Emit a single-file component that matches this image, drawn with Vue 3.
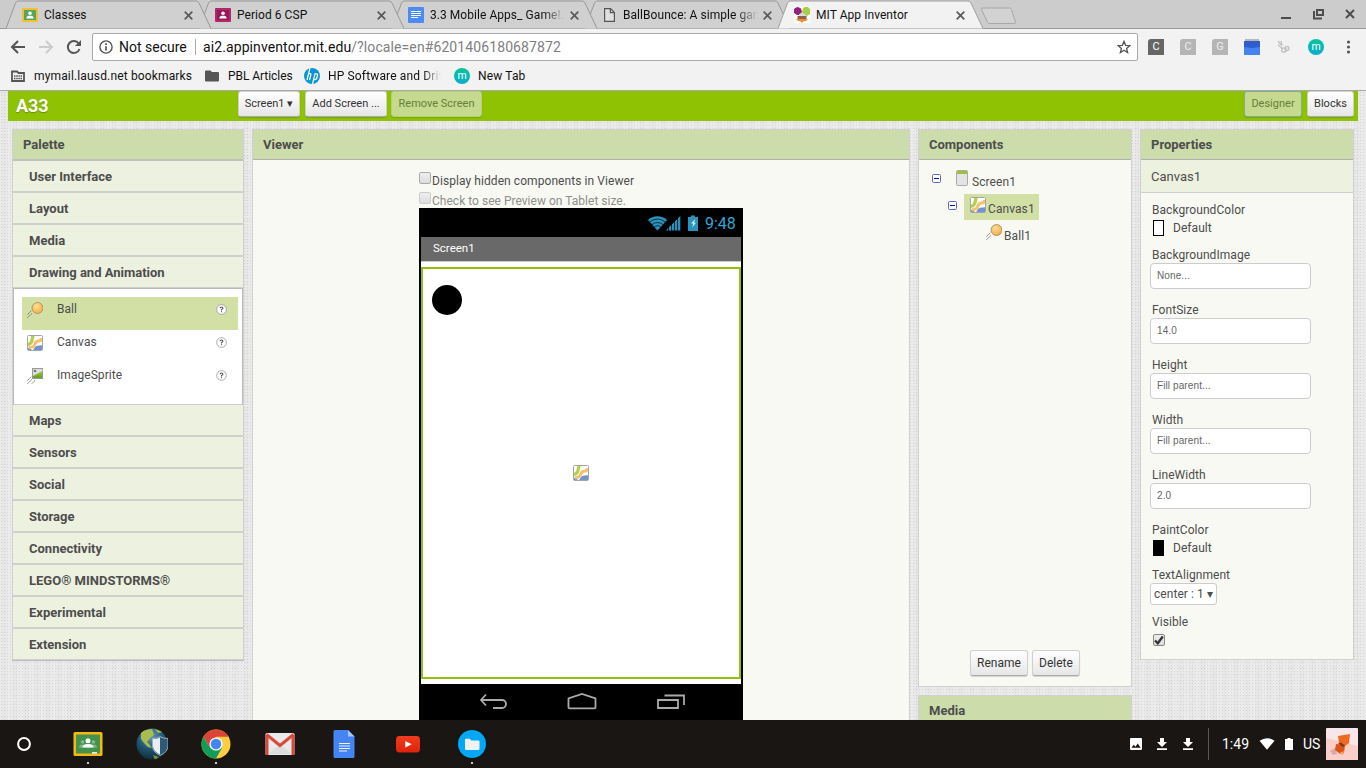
<script setup>
const tabs = [
  { title: 'Classes', icon: 'i-class-y' },
  { title: 'Period 6 CSP', icon: 'i-class-p' },
  { title: '3.3 Mobile Apps_ Game!.', icon: 'i-doc-tab' },
  { title: 'BallBounce: A simple gam', icon: 'i-file' },
  { title: 'MIT App Inventor', icon: 'i-ai', active: true },
]
const groupsTop = ['User Interface', 'Layout', 'Media', 'Drawing and Animation']
const groupsBottom = ['Maps', 'Sensors', 'Social', 'Storage', 'Connectivity', 'LEGO® MINDSTORMS®', 'Experimental', 'Extension']
const items = [
  { name: 'Ball', icon: 'i-ball', on: true },
  { name: 'Canvas', icon: 'i-canvas' },
  { name: 'ImageSprite', icon: 'i-sprite' },
]
const fields = [
  { label: 'BackgroundImage', value: 'None...' },
  { label: 'FontSize', value: '14.0' },
  { label: 'Height', value: 'Fill parent...' },
  { label: 'Width', value: 'Fill parent...' },
  { label: 'LineWidth', value: '2.0' },
]
</script>

<template>
  <div class="screen">
    <svg class="defs" width="0" height="0">
      <defs>
        <radialGradient id="gBall" cx=".4" cy=".35" r=".7"><stop offset="0" stop-color="#ffe0a0" /><stop offset=".5" stop-color="#fbc468" /><stop offset="1" stop-color="#f5ab45" /></radialGradient>
        <radialGradient id="gGlobe" cx=".45" cy=".25" r=".8"><stop offset="0" stop-color="#6f9db3" /><stop offset=".5" stop-color="#1f5673" /><stop offset="1" stop-color="#0c2533" /></radialGradient>
        <linearGradient id="gGreen" x1="0" y1="0" x2="0" y2="1"><stop offset="0" stop-color="#b9de55" /><stop offset="1" stop-color="#5d9a18" /></linearGradient>
        <linearGradient id="gRed" x1="0" y1="0" x2="0" y2="1"><stop offset="0" stop-color="#f23c1e" /><stop offset="1" stop-color="#e0220a" /></linearGradient>
        <clipPath id="cCanvas"><rect x="1" y="1" width="14" height="14" /></clipPath>
        <clipPath id="cGlobe"><circle cx="16" cy="16" r="15.5" /></clipPath>
      </defs>
      <symbol id="i-class-y" viewBox="0 0 16 16"><rect y="1" width="16" height="14" rx="1" fill="#f4c02e" /><rect x="2" y="3" width="12" height="10" fill="#57a464" /><circle cx="8" cy="6.3" r="1.8" fill="#fff" /><path d="M4.300 11.400c0-2.200 2-2.600 3.700-2.600s3.700.4 3.700 2.600z" fill="#fff" /></symbol>
      <symbol id="i-class-p" viewBox="0 0 16 16"><rect y="1" width="16" height="14" rx="1" fill="#b3266b" /><rect x="2" y="3" width="12" height="10" fill="#931c56" /><circle cx="8" cy="6.300" r="1.800" fill="#fff" /><path d="M4.300 11.400c0-2.200 2-2.600 3.700-2.600s3.700.4 3.700 2.600z" fill="#fff" /></symbol>
      <symbol id="i-doc-tab" viewBox="0 0 16 16"><rect width="16" height="16" rx="1" fill="#4c8bf5" /><path d="M3 4.500h10M3 6.500h10M3 8.500h10M3 10.500h7" stroke="#fff" /></symbol>
      <symbol id="i-file" viewBox="0 0 16 16"><path d="M3.600 1.600h5.900l3.900 3.900v8.900H3.600z" fill="#e0e0e0" stroke="#555" stroke-width="1.200" /><path d="M9.300 1.600v4.100h4.100" fill="none" stroke="#555" stroke-width="1.200" /></symbol>
      <symbol id="i-ai" viewBox="0 0 16 16"><rect width="16" height="16" fill="#fff" /><path d="M0 2L2 .5 4 0l3 1.500L8 5 6 8H3L0 6z" fill="#93207d" /><path d="M9 1l2-1h3l2 2v5l-3 2-3-1-2-3z" fill="#a5cf47" /><path d="M4.500 9Q5 6 8 6t3.500 3z" fill="#d9d9d9" /><rect x="3.500" y="9" width="9" height="3" fill="#8d6047" /><path d="M2 12h12l-2 2H10l-2 2-2-2H4z" fill="#f28a30" /></symbol>
      <symbol id="i-ball" viewBox="0 0 16 16"><circle cx="10.500" cy="6" r="5.500" fill="url(#gBall)" stroke="#a99267" stroke-width=".9" /><path d="M.5 12.500l4-4M.5 15.800l4.500-4.500" stroke="#666" stroke-width=".9" stroke-dasharray="2 .7" /></symbol>
      <symbol id="i-sprite" viewBox="0 0 16 16"><rect x="5.500" y=".500" width="10" height="10" fill="url(#gGreen)" stroke="#999" /><path d="M6 1h9.500v2L6 8z" fill="#ddd" /><circle cx="8" cy="3" r="1.300" fill="#777" /><path d="M.5 12.500l4-4M.5 15.800l4.500-4.500M5 15.500l3-3" stroke="#666" stroke-width=".9" stroke-dasharray="2 .7" /></symbol>
      <symbol id="i-canvas" viewBox="0 0 16 16"><rect x=".5" y=".5" width="15" height="15" rx="1" fill="#fff" stroke="#a5a5a5" /><g clip-path="url(#cCanvas)"><path d="M6 16c1-4 3-5.500 6-5.500l4-.5v6z" fill="#7193d0" /><path d="M0 13q4-1 5 3H0z" fill="#7193d0" /><path d="M1 9.500c4-.5 4-4 5-9" fill="none" stroke="#b4d04c" stroke-width="3.300" /><path d="M2 12.500c6 .5 5-3 7-5.500 2-2 5 .500 6-4" fill="none" stroke="#f7c06a" stroke-width="3.200" /></g></symbol>
      <symbol id="i-help" viewBox="0 0 12 12"><circle cx="6" cy="6" r="5.300" fill="#fff" stroke="#999" stroke-width=".9" /><path d="M4.400 4.700q0-1.500 1.600-1.500t1.600 1.400Q7.600 5.500 6 6v1M6 8v1" fill="none" stroke="#4a4a4a" stroke-width="1.100" /></symbol>
      <symbol id="i-minus" viewBox="0 0 9 9"><rect x=".5" y=".5" width="8" height="8" rx="1.200" fill="#fff" stroke="#5a6fb8" /><path d="M2 4.500h5" stroke="#0a1a8c" /></symbol>
      <symbol id="i-screen" viewBox="0 0 12 16"><rect x=".5" y=".5" width="11" height="15" rx="1" fill="#e3e3e3" stroke="#aaa" /><path d="M1 1h10v3H1z" fill="#a2c037" /></symbol>
      <symbol id="i-dl" viewBox="0 0 12 12"><path d="M4 0h4v4h3L6 9 1 4h3zM1 10.300h10V12H1z" fill="#fff" /></symbol>
    </svg>

    <header class="tabstrip">
      <div v-for="(t, i) in tabs" :key="t.title" class="tab" :class="['t' + i, { active: t.active }]">
        <svg class="shape" width="206" height="29"><path d="M0 28.500L9.500 3Q10.500 1 12.500 1H190Q192 1 193 3L205 28.500" :fill="t.active ? '#f2f2f2' : '#d0d0d0'" :stroke="t.active ? '#a0a0a0' : '#999'" /></svg>
        <svg class="ico16"><use :href="'#' + t.icon" /></svg>
        <span class="ttl" :class="{ fade: i === 2 || i === 3 }">{{ t.title }}</span>
        <svg class="x" width="9" height="9"><path d="M.7.7l7.600 7.600M8.300.7L.7 8.300" stroke="#5a5a5a" stroke-width="1.700" /></svg>
      </div>
      <svg class="newtab" width="36" height="18"><path d="M3 1h26.500q1.500 0 2 1.500l4 12.500q.300 1.500-1.500 1.500H9.500Q8 16.500 7.300 15L1.500 2.500Q1 1 3 1z" fill="#d2d2d2" stroke="#a8a8a8" /></svg>
      <svg class="winctl" width="76" height="12"><path d="M1 10h10" stroke="#4d4d4d" stroke-width="2" /><path d="M37 2h6v5h-6zM34 3v7.500h8" fill="none" stroke="#4d4d4d" stroke-width="2" /><path d="M66 2l8 8M74 2l-8 8" stroke="#4d4d4d" stroke-width="2" /></svg>
    </header>

    <div class="navbar">
      <svg class="navs" width="92" height="34"><path d="M25 17H12.500M18 11l-6 6 6 6" fill="none" stroke="#555" stroke-width="2" /><path d="M39 17h12.500M46 11l6 6-6 6" fill="none" stroke="#ccc" stroke-width="2" /><path d="M79.500 19a6 6 0 1 1-.8-5.500" fill="none" stroke="#555" stroke-width="2" /><path d="M81 10v6h-6z" fill="#555" /></svg>
      <div class="omni">
        <svg class="info" width="14" height="14"><circle cx="7" cy="7" r="6.100" fill="none" stroke="#555" stroke-width="1.400" /><path d="M7 6.200v4.300M7 3.300v1.700" stroke="#555" stroke-width="1.700" /></svg>
        <span class="ns">Not secure</span><span class="sep"></span>
        <span class="url">ai2.appinventor.mit.edu<em>/?locale=en#6201406180687872</em></span>
        <svg class="star" width="14" height="14"><path d="M7 1.300l1.600 4 4.300.3-3.300 2.800 1 4.200L7 10.300l-3.600 2.300 1-4.200L1.100 5.600l4.300-.3z" fill="none" stroke="#555" stroke-width="1.300" /></svg>
      </div>
      <div class="exts">
        <span class="ext dark">C</span><span class="ext">C</span><span class="ext">G</span>
        <svg class="ico16"><path d="M1 0h14v2H1z" fill="#b8b8b8" /><rect y="2" width="16" height="14" fill="#4683ef" /><path d="M0 2h16v6l-8 1-8-1z" fill="#2f5dcb" /></svg>
        <svg class="ico16"><g fill="none" stroke="#c2c2c2" stroke-width="1.300"><path d="M2 2l3 4M5 2l1 5M2 6l5 4" /><ellipse cx="8" cy="11" rx="2.500" ry="2" /><ellipse cx="11" cy="9.500" rx="2" ry="2" /></g></svg>
        <span class="mdot">m</span>
        <svg class="ico16"><g fill="#555"><circle cx="8.500" cy="3" r="1.600" /><circle cx="8.500" cy="8" r="1.600" /><circle cx="8.500" cy="13" r="1.600" /></g></svg>
      </div>
    </div>

    <div class="bookmarks">
      <svg class="b1" width="14" height="12"><path d="M1 1.500h5L7.500 3H13v8H1z" fill="#f2f2f2" stroke="#555" stroke-width="1.800" /><path d="M3 6h8M3 8.500h8" stroke="#555" stroke-width="1.500" stroke-dasharray="1.500 .7" /></svg>
      <span class="bt1">mymail.lausd.net bookmarks</span>
      <svg class="b2" width="14" height="12"><path d="M0 1.500Q0 .5 1 .5h4.500L7 2h6q1 0 1 1v7.500q0 1-1 1H1q-1 0-1-1z" fill="#555" /></svg>
      <span class="bt2">PBL Articles</span>
      <svg class="b3 ico16"><circle cx="8" cy="8" r="8" fill="#0a96d6" /><path d="M6 0L3 12M3.600 8Q4.500 5.500 6 5.500T6.500 8L5.500 12M8.500 16L11 5.800h1.500q1.300 0 1 1.500L12.800 10q-.4 1.600-1.800 1.600H10" fill="none" stroke="#fff" stroke-width="1.200" /></svg>
      <span class="bt3 fade">HP Software and Driv</span>
      <span class="b4 mdot">m</span>
      <span class="bt4">New Tab</span>
    </div>

    <main class="page">
      <div class="topbar">
        <span class="proj">A33</span>
        <button class="btn w62">Screen1 <i>▾</i></button><button class="btn w82">Add Screen ...</button><button class="btn off w91">Remove Screen</button>
        <button class="btn off foc push">Designer</button><button class="btn w47">Blocks</button>
      </div>
      <div class="cols">
        <section class="palette">
          <h2>Palette</h2>
          <div v-for="g in groupsTop" :key="g" class="grp">{{ g }}</div>
          <div class="list">
            <div v-for="it in items" :key="it.name" class="item" :class="{ on: it.on }">
              <svg class="ico16"><use :href="'#' + it.icon" /></svg><span>{{ it.name }}</span>
              <svg class="help" width="11" height="11"><use href="#i-help" /></svg>
            </div>
          </div>
          <div v-for="g in groupsBottom" :key="g" class="grp">{{ g }}</div>
        </section>

        <section class="panel viewer">
          <h2>Viewer</h2>
          <div class="chk"><b class="box"></b><span>Display hidden components in Viewer</span></div>
          <div class="chk dim"><b class="box"></b><span>Check to see Preview on Tablet size.</span></div>
          <div class="phone">
            <div class="status">
              <svg width="50" height="16"><path d="M0 5a14 14 0 0 1 19 0l-9.500 10.500z" fill="#2b92bd" /><path d="M1.500 7.300a11.500 11.500 0 0 1 16 0M3.700 9.800a8.500 8.500 0 0 1 11.600 0M6 12.300a5.200 5.200 0 0 1 7 0" fill="none" stroke="#06161d" stroke-width=".8" /><path d="M18 15.500h2.300v-2.500zM21 15.500h2.300v-5.500L21 12zM24 15.500h2.300V7L24 9.300zM27 15.500h2.300V4L27 6.300zM30 15.500h2.300V1L30 3.300z" fill="#2b92bd" /><path d="M40 2h3V.5h4V2h3v14H40z" fill="#2b92bd" /><path d="M47.300 4l-4.300 4.500h2.200l-1 4 3.800-4.800h-2z" fill="#d8eef7" /></svg>
              <span>9:48</span>
            </div>
            <div class="title">Screen1</div>
            <div class="body"><div class="canvas"><i class="ball"></i><svg class="ico16 cicon"><use href="#i-canvas" /></svg></div></div>
            <svg class="keys" width="324" height="37"><g fill="none" stroke="#aaa" stroke-width="1.800"><path d="M67 10.500l-5 5.500 5 5.500M62.500 16H83a4 4 0 0 1 0 8H74" /><path d="M149.500 23.500v-9L163 10l13.500 4.500v9q0 .8-1 .8h-25q-1 0-1-.8z" /><path d="M239 16h20v8h-20zM245.500 11.500H265V21" /></g></svg>
          </div>
        </section>

        <div class="ccol">
          <section class="panel comps">
            <h2>Components</h2>
            <div class="tree">
              <div class="row r1"><svg width="9" height="9" class="mn"><use href="#i-minus" /></svg><svg width="12" height="16"><use href="#i-screen" /></svg><span>Screen1</span></div>
              <div class="row r2"><svg width="9" height="9" class="mn"><use href="#i-minus" /></svg><div class="sel"><svg class="ico16"><use href="#i-canvas" /></svg><span>Canvas1</span></div></div>
              <div class="row r3"><svg class="ico16"><use href="#i-ball" /></svg><span>Ball1</span></div>
            </div>
            <div class="acts"><button class="btn w58">Rename</button><button class="btn w48">Delete</button></div>
          </section>
          <section class="panel media"><h2>Media</h2></section>
        </div>

        <section class="panel props">
          <h2>Properties</h2>
          <div class="sub">Canvas1</div>
          <div class="form">
            <label>BackgroundColor</label>
            <div class="color"><i></i>Default</div>
            <div v-for="f in fields" :key="f.label" class="field"><label>{{ f.label }}</label><div class="inp">{{ f.value }}</div></div>
            <label>PaintColor</label>
            <div class="color blk"><i></i>Default</div>
            <label>TextAlignment</label>
            <div class="select">center : 1 <i>▾</i></div>
            <label>Visible</label>
            <b class="box on"><svg width="10" height="10"><path d="M1 5.500L3.800 8.300 8.800 1.500" fill="none" stroke="#333" stroke-width="2.300" /></svg></b>
          </div>
        </section>
      </div>
    </main>

    <footer class="shelf">
      <svg class="launch" width="14" height="14"><circle cx="7" cy="7" r="5.900" fill="none" stroke="#fff" stroke-width="2" /></svg>
      <div class="apps">
        <div class="app run"><svg width="32" height="32"><rect x="1.500" y="4" width="29" height="24" rx="1.500" fill="#f6b911" /><rect x="4" y="6.500" width="24" height="19" fill="#45914e" /><g fill="#85bb8b"><circle cx="10.500" cy="14" r="1.800" /><circle cx="21.500" cy="14" r="1.800" /><path d="M7 19.500q0-3 4-3h10q4 0 4 3z" /></g><circle cx="16" cy="12.800" r="2.500" fill="#fff" /><path d="M10.500 19.500q0-3.500 5.500-3.500t5.500 3.500z" fill="#fff" /><path d="M20 24h5v1.800h-5z" fill="#e8e8e8" /></svg></div>
        <div class="app"><svg width="32" height="32"><g clip-path="url(#cGlobe)"><rect width="32" height="32" fill="url(#gGlobe)" /><path d="M5 3l11-2 2 6-3 2-4 5 2 2 3 4-4-1-4-4-3-4z" fill="#a9bd4f" /><path d="M19 1l8 3-5 1z" fill="#a9bd4f" /><path d="M17 27l6 2-4 3z" fill="#7d9040" /></g><path d="M16.500 10.500q4 0 7.500-1.800 4 1.800 8 1.800V18q0 6-8 9.500-7.500-3.500-7.500-9.500z" fill="#2b5b78" stroke="#c9d6dd" stroke-width=".7" /><path d="M17 11q4 0 7-1.600v17.200Q17 23 17 18z" fill="#e8eef2" /></svg></div>
        <div class="app run"><svg width="32" height="32"><circle cx="16" cy="16" r="14.500" fill="#ffcd40" /><path d="M3.400 8.800A14.500 14.500 0 0 1 28.600 8.800H16L9.800 19.600z" fill="#db4437" /><path d="M3.400 8.800A14.500 14.500 0 0 0 16 30.500l6.200-10.900L9.800 19.600z" fill="#0f9d58" /><circle cx="16" cy="16" r="6.600" fill="#f5f5f5" /><circle cx="16" cy="16" r="5.200" fill="#4285f4" /></svg></div>
        <div class="app"><svg width="32" height="32"><rect x="1.500" y="5" width="29" height="22" rx="1.500" fill="#e9e9e9" /><path d="M4 26l12-10 12 10z" fill="#ddd" /><path d="M1.500 27V6.500L4.500 8v19zM30.500 27V6.500L27.500 8v19z" fill="#d54b3d" /><path d="M2.500 6.500L16 17.500 29.500 6.500" fill="none" stroke="#d54b3d" stroke-width="3" /></svg></div>
        <div class="app"><svg width="32" height="32"><path d="M5.500 3.500Q5.500 2 7 2h13l6.500 6.500v20q0 1.500-1.500 1.500H7q-1.500 0-1.500-1.500z" fill="#4485f3" /><path d="M20 2l6.500 6.500H20z" fill="#a4c4fb" /><path d="M11 15.500h11M11 18h11M11 20.500h11M11 23h8" stroke="#f0f0f0" stroke-width="1.200" /></svg></div>
        <div class="app"><svg width="32" height="32"><rect x="4" y="8" width="24" height="16.500" rx="3.500" fill="url(#gRed)" /><path d="M13.200 13l6.600 3.200-6.600 3.200z" fill="#fff" /></svg></div>
        <div class="app run"><svg width="32" height="32"><circle cx="16" cy="16" r="14" fill="#03a9f4" /><path d="M9 12q0-1.200 1.200-1.200h3.500l1.600 1.600h7q1.200 0 1.200 1.200v7.200q0 1.200-1.200 1.200H10.200Q9 22 9 20.800z" fill="#f1f1f1" /></svg></div>
      </div>
      <div class="tray">
        <svg class="pic" width="12" height="12"><rect width="12" height="12" rx="1" fill="#fff" /><path d="M1.500 9.800l2.300-3 1.700 1.900L7.700 5.500l3 4.300z" fill="#1a1613" /></svg>
        <svg class="d1" width="12" height="12"><use href="#i-dl" /></svg>
        <svg class="d2" width="12" height="12"><use href="#i-dl" /></svg>
        <span class="vline"></span><span class="time">1:49</span>
        <svg class="wf" width="16" height="12"><path d="M.5 2.800Q8-2.500 15.500 2.800L8 11.800z" fill="#fff" /></svg>
        <svg class="bat" width="8" height="12"><path d="M2.500 0h3v1H8v11H0V1h2.500z" fill="#fff" /></svg>
        <span class="us">US</span>
        <svg class="ava" width="32" height="32"><rect width="32" height="32" rx="1" fill="#f8e6ea" /><path d="M0 10l32 8v14H0z" fill="#fbcfc9" /><path d="M4 23l5-3 2 6-4 1z" fill="#d9a9a4" /><path d="M12 8l12-2-1 9-4 3-6-3z" fill="#f0691f" /><path d="M10 16l9 1-1 8-4 1-5-4z" fill="#d9551a" /><path d="M12 15.500l3-1 4 3-2 1.500z" fill="#8e3510" /><path d="M13 25l5-2-1 4z" fill="#eaa85e" /></svg>
      </div>
    </footer>
  </div>
</template>

<style>
html, body { margin: 0; overflow: hidden; }
</style>

<style scoped>
.screen { width: 1366px; height: 768px; overflow: hidden; display: flex; flex-direction: column; font-family: Roboto, sans-serif; font-size: 12px; color: #111; background: #f2f2f2; box-sizing: border-box; position: relative; }
.screen * { box-sizing: border-box; }
svg { display: block; flex: none; }
.defs { position: absolute; }
i, em { font-style: normal; }
span { white-space: nowrap; }
.ico16 { width: 16px; height: 16px; }
.mdot { width: 16px; height: 16px; flex: none; border-radius: 50%; background: linear-gradient(#08c59a, #0aaccc); color: #fff; font-size: 10.500px; line-height: 15px; text-align: center; letter-spacing: 0; }
.tabstrip { height: 29px; flex: none; background: #ccc; border-bottom: 1px solid #999; display: flex; padding-left: 6px; position: relative; }
.tab { width: 193px; height: 29px; flex: none; position: relative; display: flex; align-items: center; padding-left: 16px; }
.t0 { z-index: 4; } .t1 { z-index: 3; } .t2 { z-index: 2; } .t3 { z-index: 1; } .t4 { z-index: 6; }
.shape { position: absolute; left: 0; top: 0; z-index: -1; }
.tab > .ico16 { margin-top: 1px; }
.ttl { margin-left: 6px; width: 135px; margin-top: 1px; line-height: 16px; letter-spacing: .05px; }
.fade { -webkit-mask-image: linear-gradient(90deg, #000 84%, transparent 100%); mask-image: linear-gradient(90deg, #000 84%, transparent 100%); }
.x { margin-left: 5px; margin-top: 1px; }
.newtab { margin: 7px 0 0 9px; }
.winctl { margin: 8px 10px 0 auto; }
.navbar { height: 34px; flex: none; display: flex; }
.navs { margin-top: 1px; }
.omni { width: 1046px; height: 28px; margin-top: 4px; background: #fff; border: 1px solid #a9a9a9; border-radius: 2px; display: flex; align-items: center; padding-left: 6px; font-size: 14px; }
.ns { margin-left: 6px; width: 76px; }
.sep { width: 1px; height: 16px; background: #aaa; }
.url { margin-left: 7px; letter-spacing: .1px; }
.url em { color: #808080; }
.star { margin-left: auto; margin-right: 6px; }
.exts { display: flex; gap: 16px; align-items: center; padding: 2px 0 0 10px; }
.ext { width: 16px; height: 16px; background: #b5b5b5; color: #eee; font-size: 11px; line-height: 16px; text-align: center; border-top-left-radius: 3px; }
.ext.dark { background: #666; color: #fff; }
.bookmarks { height: 28px; flex: none; border-bottom: 1px solid #a8a8a8; display: flex; align-items: center; padding: 0 0 2px 11px; line-height: 16px; letter-spacing: .15px; }
.bt1 { margin-left: 9px; width: 171px; }
.bt2 { margin-left: 9px; width: 76px; letter-spacing: -.05px; }
.bt3 { margin-left: 8px; width: 113px; }
.b4 { margin-left: 13px; }
.bt4 { margin-left: 8px; }
.page { flex: 1; min-height: 0; overflow: hidden; background-color: #ebebeb; background-image: radial-gradient(circle at 1.5px 1.5px, rgba(0,0,0,.09) .6px, transparent .9px), radial-gradient(circle at 4px 3px, rgba(0,0,0,.02) 2px, transparent 4px); background-size: 3px 3px, 11px 7px; padding: 0 8px; }
.topbar { height: 30px; background: #8fc202; display: flex; padding: 0 4px 0 8px; }
.proj { font-size: 18px; font-weight: 700; color: #fff; width: 222px; line-height: 29px; letter-spacing: -.1px; text-shadow: 0 1px 1px #688c05; }
.btn { font: 12px/14px Roboto, sans-serif; padding: 0; height: 26px; border: 1px solid #d0d0d0; border-bottom-color: #aaa; border-radius: 3px; background: linear-gradient(#fff, #e6e6e6); color: #333; box-shadow: 0 1px 1px rgba(0,0,0,.15); white-space: nowrap; flex: none; }
.topbar .btn { font-size: 11px; margin-right: 4px; }
.topbar .w62 { width: 62px; margin-right: 5px; } .topbar .w82 { width: 82px; } .w91 { width: 91px; } .w58 { width: 58px; } .w48 { width: 48px; }
.topbar .w47 { width: 47px; margin-right: 0; }
.btn.off { background: #c5d98f; border-color: #b6cf78; color: #68803a; }
.btn.foc { border-color: #7fb08c; width: 58px; }
.topbar .push { margin-left: auto; margin-right: 5px; }
.cols { display: flex; align-items: flex-start; padding: 8px 4px 0; gap: 8px; }
h2 { margin: 0; font-size: 13px; font-weight: 700; color: #4d4d4d; background: #ccdcab; height: 30px; line-height: 29px; padding-left: 10px; border-bottom: 1px solid #b0b0b0; }
.palette { width: 232px; border: 1px solid #d0d0d0; border-bottom: 1px solid #bbb; }
.palette h2 { height: 31px; line-height: 29px; border-bottom: 2px solid #c0c0c0; }
.grp { height: 32px; line-height: 30px; padding-top: 1px; border-bottom: 2px solid #d0d0d0; background: #edf1e0; padding-left: 16px; font-size: 13px; font-weight: 700; color: #4d4d4d; }
.grp:last-child { border-bottom-width: 1px; height: 31px; }
.list { margin-top: -1px; height: 117px; background: #fff; border: 1px solid #bbb; border-bottom-color: #ccc; padding: 8px 4px 0 8px; }
.item { height: 33px; width: 216px; display: flex; padding: 5px 0 0 5px; color: #4d4d4d; line-height: 15px; }
.item.on { background: #d2e0a6; }
.item span { margin-left: 14px; width: 159px; letter-spacing: .05px; }
.help { margin-top: 2px; }
.panel { border: 1px solid #d0d0d0; background: #f8f9f3; }
.viewer { width: 658px; height: 620px; }
.chk { display: flex; margin-left: 166px; height: 20px; line-height: 16px; color: #4d4d4d; align-items: flex-end; letter-spacing: .07px; }
.viewer h2 + .chk { margin-top: 9px; }
.box { width: 12px; height: 12px; border: 1px solid #aaa; border-radius: 2px; background: linear-gradient(#eee, #ddd); display: block; margin-bottom: 5px; }
.chk span { margin-left: 1px; }
.dim { color: #8d8f8b; letter-spacing: .02px; }
.dim .box { border-color: #ccc; }
.phone { margin: -1px 0 0 166px; width: 324px; background: #000; padding: 0 2px; position: relative; }
.status { height: 29px; display: flex; align-items: center; padding-left: 227px; color: #33a5d4; font-size: 16px; }
.status span { margin: 1px 0 0 7px; }
.title { height: 25px; background: #696969; border-bottom: 1px solid #ccc; color: #fff; padding-left: 12px; line-height: 22px; font-size: 11.500px; }
.body { background: #fff; height: 422px; padding-top: 5px; }
.canvas { height: 412px; border: 2px solid #94bf0b; position: relative; }
.ball { position: absolute; left: 9px; top: 16px; width: 30px; height: 30px; border-radius: 50%; background: #000; }
.cicon { position: absolute; left: 150px; top: 196px; }
.keys { margin-left: -2px; }
.comps { width: 214px; height: 558px; display: flex; flex-direction: column; }
.tree { padding-top: 8px; flex: 1; color: #4d4d4d; letter-spacing: .08px; }
.row { display: flex; height: 27px; line-height: 14px; }
.row span { margin-top: 7px; }
.r1 { padding-left: 13px; } .r1 .mn { margin: 6px 15px 0 0; } .r1 svg + svg { margin: 2px 4px 0 0; }
.r2 { padding-left: 29px; } .r2 .mn { margin: 6px 7px 0 0; }
.r3 { padding-left: 67px; } .r3 .ico16 { margin-top: 2px; } .r3 span { margin-left: 2px; }
.sel { display: flex; width: 75px; height: 26px; margin-top: -1px; background: #d2e0a6; padding: 3px 0 0 6px; }
.row .sel span { margin: 5px 0 0 2px; }
.acts { display: flex; gap: 4px; padding: 0 0 10px 51px; }
.media { width: 214px; height: 60px; margin-top: 8px; }
.props { width: 214px; height: 531px; }
.ccol { flex: none; }
.sub { height: 33px; line-height: 33px; background: #edf1e0; border-bottom: 1px solid #d0d0d0; padding-left: 10px; font-size: 13px; color: #4d4d4d; }
.form { padding: 8px 0 0 9px; color: #4d4d4d; letter-spacing: .06px; }
label { display: block; height: 18px; line-height: 18px; padding-left: 2px; }
.color { display: flex; align-items: center; height: 18px; margin-bottom: 9px; padding-left: 3px; }
.color i { width: 11px; height: 16px; border: 1px solid #000; background: #fff; margin-right: 9px; }
.color.blk i { background: #000; }
.field { height: 55px; }
.inp { width: 161px; height: 26px; margin-top: -1px; border: 1px solid #ccc; border-radius: 4px; background: #fff; line-height: 24px; padding-left: 6px; font-family: "Liberation Sans", Arial, sans-serif; font-size: 10px; letter-spacing: .1px; color: #666; }
.select { width: 67px; height: 22px; line-height: 20px; margin: -1px 0 8px; border: 1px solid #ccc; border-radius: 3px; background: #fff; padding-left: 3px; white-space: nowrap; }
.box.on { margin: 3px 0 0 3px; border-color: #888; }
.shelf { height: 48px; flex: none; background: #1a1613; display: flex; color: #fff; position: relative; }
.launch { margin: 17px 0 0 17px; }
.apps { display: flex; gap: 32px; margin: 8px 0 0 41px; }
.app { width: 32px; height: 38px; }
.run::after { content: ""; display: block; width: 2px; height: 2px; background: #ccc; margin: 2px 0 0 15px; }
.tray { margin: 0 8px 0 auto; display: flex; align-items: center; font-size: 14px; }
.d1 { margin-left: 14px; } .d2 { margin-left: 14px; }
.vline { width: 1px; height: 32px; background: #5a5653; margin-left: 14px; }
.time { margin-left: 13px; width: 37px; }
.wf { margin-right: 10px; }
.us { margin-left: 10px; width: 23px; }
</style>
